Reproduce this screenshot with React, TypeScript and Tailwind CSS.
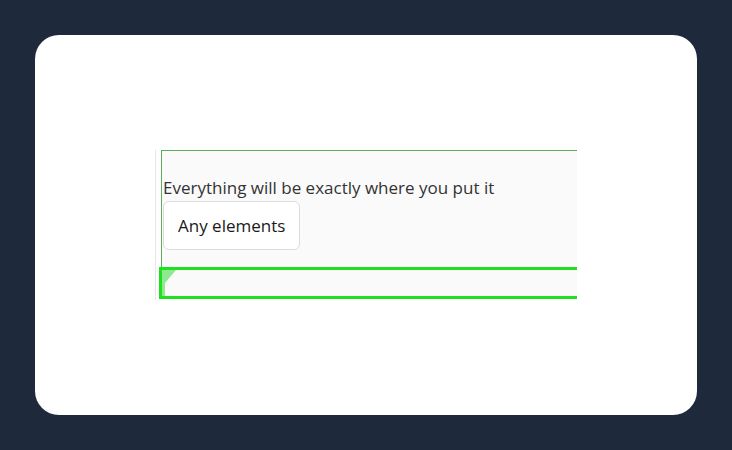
import React from "react";

export default function App() {
  return (
    <div className="w-[732px] h-[450px] bg-[#1e293b] p-[35px]" style={{ fontFamily: '"Open Sans", "Noto Sans", sans-serif' }}>
      <div className="h-[380px] bg-white rounded-[24px] pt-[115px] pl-[120px]">
        <div className="w-[422px] h-[150px] overflow-hidden border-l border-[#e6e6e6]">
          <div className="ml-[5px] w-[600px] h-[117px] border-t border-l border-[#5cae5c] bg-[#fafafa] pt-[25px] pl-px">
            <p className="text-[17px] leading-[24px] text-[#333] whitespace-nowrap">Everything will be exactly where you put it</p>
            <button className="mt-px h-[49px] px-[14px] border border-[#dcdcdc] rounded-[6px] bg-white text-[17px] text-[#1a1a1a]">
              Any elements
            </button>
          </div>
          <div className="ml-[3px] w-[600px] h-[32px] border-[3px] border-[#1ee01e] bg-[#fafafa] relative">
            <svg className="absolute top-0 left-0" width="14" height="26" viewBox="0 0 14 26">
              <polygon points="0,0 14,0 3,13 3,26 0,26" fill="#8eea8e" />
            </svg>
          </div>
        </div>
      </div>
    </div>
  );
}
